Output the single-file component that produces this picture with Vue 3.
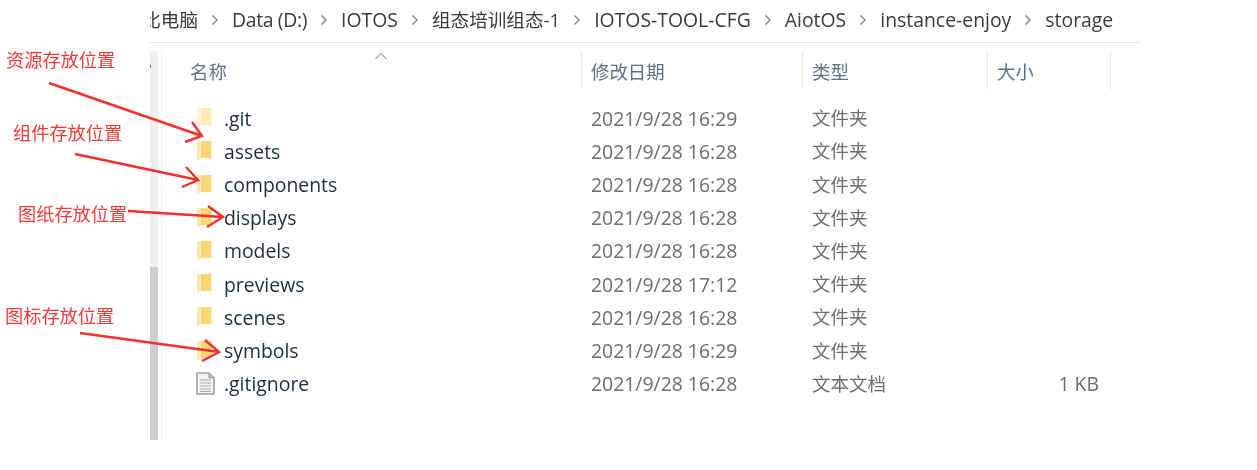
<script setup>
const crumbs = [
  { t: '比电脑', clip: true, cjk: true },
  { t: 'Data (D:)', tight: true },
  { t: 'IOTOS' },
  { t: '组态培训组态-1', cjk: true },
  { t: 'IOTOS-TOOL-CFG' },
  { t: 'AiotOS' },
  { t: 'instance-enjoy' },
  { t: 'storage' }
]
const headers = ['名称', '修改日期', '类型', '大小']
const rows = [
  { name: '.git', date: '2021/9/28 16:29', type: '文件夹', faded: true },
  { name: 'assets', date: '2021/9/28 16:28', type: '文件夹' },
  { name: 'components', date: '2021/9/28 16:28', type: '文件夹' },
  { name: 'displays', date: '2021/9/28 16:28', type: '文件夹' },
  { name: 'models', date: '2021/9/28 16:28', type: '文件夹' },
  { name: 'previews', date: '2021/9/28 17:12', type: '文件夹' },
  { name: 'scenes', date: '2021/9/28 16:28', type: '文件夹' },
  { name: 'symbols', date: '2021/9/28 16:29', type: '文件夹' },
  { name: '.gitignore', date: '2021/9/28 16:28', type: '文本文档', size: '1 KB', file: true }
]
const labels = [
  { t: '资源存放位置', x: 6, y: 49 },
  { t: '组件存放位置', x: 13, y: 122 },
  { t: '图纸存放位置', x: 18, y: 203 },
  { t: '图标存放位置', x: 5, y: 305 }
]
const arrows = [
  { line: '49,83 202,136', head: '192,122 202,136 185,142' },
  { line: '75,154 198,180', head: '186,167 198,180 182,187' },
  { line: '128,211 223,217', head: '208,206 223,217 207,227' },
  { line: '80,333 219,352', head: '205,340 219,352 202,361' }
]
</script>

<template>
  <div class="page">
    <nav class="crumbs">
      <template v-for="(c, i) in crumbs" :key="c.t">
        <span class="crumb" :class="{ clip: c.clip, cjk: c.cjk, tight: c.tight }"><span>{{ c.t }}</span></span>
        <svg v-if="i < crumbs.length - 1" class="chev" width="8" height="12" viewBox="0 0 8 12">
          <path d="M1.5 1.5 L6 6 L1.5 10.5" fill="none" stroke="#8a8a8a" stroke-width="1.5" />
        </svg>
      </template>
    </nav>

    <div class="pane">
      <div class="scrollbar">
        <i class="tick"></i>
        <div class="thumb"></div>
      </div>
      <div class="list">
        <div class="head">
          <div v-for="(h, i) in headers" :key="h" class="hcell" :class="'c' + i">
            {{ h }}
            <svg v-if="i === 0" class="caret" width="14" height="8" viewBox="0 0 14 8">
              <path d="M1.5 7 L7 1.5 L12.5 7" fill="none" stroke="#a9a9a9" stroke-width="1.2" />
            </svg>
          </div>
        </div>
        <div class="rows">
          <div v-for="r in rows" :key="r.name" class="row">
            <div class="name c0">
              <svg v-if="r.file" class="icon" width="20" height="24" viewBox="0 0 20 24">
                <path d="M2 1 H14 L19 6 V22 H2 Z" fill="#f3f3f3" stroke="#a0a0a0" stroke-width="1.6" />
                <path d="M14 1 V6 H19 Z" fill="#c4c4c4" stroke="#a0a0a0" />
                <path d="M5 8 H16 M5 11 H16 M5 14 H16 M5 17 H16 M5 19.5 H16" stroke="#a8a8a8" stroke-width="1" />
              </svg>
              <svg v-else class="icon" :class="{ faded: r.faded }" width="20" height="22" viewBox="0 0 20 22">
                <path d="M6 1 H16.5 V18 H6 Z" fill="#f9d873" />
                <path d="M2 1 H7 V18 L3 20 H2 Z" fill="#fbe9b0" />
                <path d="M7 2 V18" stroke="#e9c25f" stroke-width="0.8" />
              </svg>
              <span>{{ r.name }}</span>
            </div>
            <div class="cell c1">{{ r.date }}</div>
            <div class="cell c2 type">{{ r.type }}</div>
            <div class="cell c3 size">{{ r.size }}</div>
          </div>
        </div>
      </div>
    </div>

    <span
      v-for="l in labels"
      :key="l.t"
      class="note"
      :style="{ left: l.x + 'px', top: l.y + 'px' }"
    >{{ l.t }}</span>

    <svg class="arrows" width="1257" height="470" viewBox="0 0 1257 470">
      <g v-for="a in arrows" :key="a.line" fill="none" stroke="#f2302c" stroke-width="2.4">
        <polyline :points="a.line" />
        <polyline :points="a.head" />
      </g>
    </svg>
  </div>
</template>

<style scoped>
.page {
  position: relative;
  width: 1257px;
  height: 470px;
  overflow: hidden;
  background: #fff;
  box-sizing: border-box;
  padding-left: 150px;
  font-family: "Open Sans", "Noto Sans", "Noto Sans CJK SC", sans-serif;
}
.crumbs {
  display: flex;
  align-items: center;
  width: 989px;
  height: 43px;
  box-sizing: border-box;
  padding-bottom: 3px;
  border-bottom: 1px solid #e4e4e4;
  font-size: 19.4px;
  color: #3a3a3a;
  filter: blur(0.45px);
}
.crumb {
  white-space: nowrap;
  line-height: 40px;
}
.cjk {
  font-size: 18.6px;
}
.tight {
  letter-spacing: -0.35px;
}
.clip {
  width: 48px;
  overflow: hidden;
  display: flex;
  justify-content: flex-end;
  flex: none;
}
.chev {
  flex: none;
  margin: 0 13px;
}
.pane {
  display: flex;
  height: 389px;
  margin-top: 8px;
}
.scrollbar {
  position: relative;
  display: flex;
  flex-direction: column;
  justify-content: flex-end;
  width: 8px;
  height: 100%;
  background: #f0f0f0;
}
.tick {
  position: absolute;
  left: 0;
  top: 14px;
  width: 1px;
  height: 3px;
  background: #777;
}
.thumb {
  height: 173px;
  background: #cdcdcd;
}
.list {
  flex: none;
  width: 949px;
  margin-left: 3px;
  border-left: 1px solid #f0f0f0;
}
.head,
.row {
  display: flex;
}
.head {
  height: 39px;
  font-size: 18.4px;
  color: #5b7089;
  filter: blur(0.45px);
}
.c0 { width: 420px; }
.c1 { width: 221px; }
.c2 { width: 185px; }
.c3 { width: 123px; }
.hcell {
  position: relative;
  box-sizing: border-box;
  padding-left: 9px;
  line-height: 41px;
  border-right: 1px solid #e8e8e8;
}
.hcell.c0 { padding-left: 28px; }
.caret {
  position: absolute;
  left: 212px;
  top: 1px;
}
.rows {
  padding-top: 11.6px;
  filter: blur(0.45px);
}
.row {
  height: 33.2px;
  align-items: center;
  font-size: 19.4px;
}
.name {
  display: flex;
  align-items: center;
  box-sizing: border-box;
  padding-left: 33px;
  color: #1f2d3a;
}
.name span {
  margin-left: 9px;
}
.icon {
  flex: none;
}
.faded {
  opacity: 0.5;
}
.cell {
  box-sizing: border-box;
  padding-left: 9px;
  color: #6e6e6e;
}
.type {
  font-size: 18.5px;
  padding-bottom: 2px;
}
.size {
  padding: 0 12px 0 0;
  text-align: right;
}
.note {
  position: absolute;
  font-size: 18.2px;
  line-height: 22px;
  color: #f23a36;
  white-space: nowrap;
  filter: blur(0.35px);
}
.arrows {
  position: absolute;
  left: 0;
  top: 0;
  pointer-events: none;
}
</style>
